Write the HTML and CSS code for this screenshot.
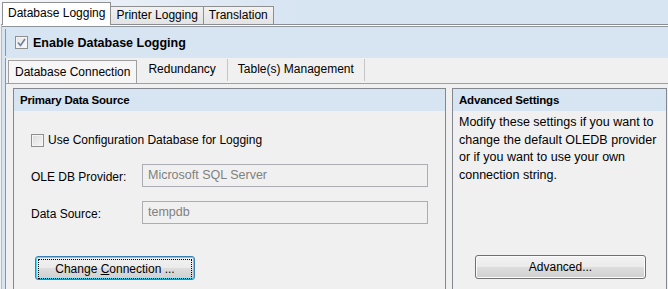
FILE: index.html
```html
<!DOCTYPE html>
<html>
<head>
<meta charset="utf-8">
<link rel="stylesheet" href="styles.css">
</head>
<body>
<div class="window">
  <div class="toptabs">
    <div class="ttab sel">Database Logging</div>
    <div class="ttab">Printer Logging</div>
    <div class="ttab">Translation</div>
  </div>
  <div class="page">
    <div class="enable">
      <span class="cb checked"><svg width="9" height="9" viewBox="0 0 9 9"><path d="M1 4.5 L3.5 7.5 L8 1" fill="none" stroke="#6d7f9c" stroke-width="1.6"/></svg></span>
      <span class="enable-label">Enable Database Logging</span>
    </div>
    <div class="inner">
      <div class="itabs">
        <div class="itab sel">Database Connection</div>
        <div class="itab">Redundancy</div>
        <div class="itab">Table(s) Management</div>
      </div>
      <div class="ipage">
        <section class="group primary">
          <div class="ghead">Primary Data Source</div>
          <div class="gbody">
            <div class="cfg"><span class="cb"></span><span>Use Configuration Database for Logging</span></div>
            <div class="field"><span class="flabel">OLE DB Provider:</span><div class="input">Microsoft SQL Server</div></div>
            <div class="field"><span class="flabel">Data Source:</span><div class="input">tempdb</div></div>
            <div class="btnrow"><button class="btn focus"><span class="focusring">Change <u>C</u>onnection ...</span></button></div>
          </div>
        </section>
        <section class="group adv">
          <div class="ghead">Advanced Settings</div>
          <div class="gbody advbody">
            <p class="desc">Modify these settings if you want to change the default OLEDB provider or if you want to use your own connection string.</p>
            <button class="btn advbtn">Advanced...</button>
          </div>
        </section>
      </div>
    </div>
  </div>
</div>
</body>
</html>
```
FILE: styles.css
```css
html, body {
  margin: 0;
  padding: 0;
  width: 668px;
  height: 289px;
  overflow: hidden;
  background: #f0f0f0;
  font-family: "Liberation Sans", Arial, sans-serif;
  font-size: 12px;
  color: #000;
}
.window {
  display: flex;
  flex-direction: column;
  height: 289px;
}
.toptabs {
  display: flex;
  align-items: flex-end;
  height: 24px;
  padding-left: 2px;
  background: linear-gradient(90deg, #f4f6f9 0, #d7e4f2 300px);
  position: relative;
  z-index: 2;
}
.ttab {
  height: 17px;
  line-height: 17px;
  padding: 0 5px;
  border: 1px solid #8e8f8f;
  border-bottom: none;
  border-left: none;
  background: linear-gradient(#f2f2f2, #e3e3e3);
  color: #000;
  box-sizing: content-box;
}
.ttab.sel {
  height: 22px;
  line-height: 21px;
  padding: 0 5px;
  border-left: 1px solid #8e8f8f;
  background: #fff;
  margin-bottom: -1px;
  font-size: 12px;
}
.page {
  flex: 1;
  margin-left: 1px;
  border-top: 1px solid #898c95;
  box-shadow: inset 0 1px 0 #ffffff, inset 0 2px 0 #8e949c;
  border-left: 1px solid #b8bcc2;
  background: #d7e4f2;
  padding: 2px 0 0 3px;
  display: flex;
  flex-direction: column;
}
.enable {
  display: flex;
  align-items: center;
  height: 27px;
  padding-left: 9px;
  margin-top: 2px;
  border-left: 1px solid #8e949c;
}
.enable-label {
  font-weight: bold;
  font-size: 12.5px;
  margin-left: 5px;
}
.cb {
  width: 11px;
  height: 11px;
  border: 1px solid #8e8f8f;
  background: linear-gradient(135deg, #dcdcdc, #f6f6f6);
  box-shadow: inset 0 0 0 1px #f4f4f4;
  display: inline-flex;
  align-items: center;
  justify-content: center;
  flex: none;
}
.cb.checked {
  background: linear-gradient(135deg, #e4e4e4, #fbfbfb);
}
.inner {
  flex: 1;
  display: flex;
  flex-direction: column;
  margin-top: 2px;
  border-left: 1px solid #8e949c;
}
.itabs {
  display: flex;
  height: 25px;
  background: #f0f0f0;
  padding-left: 2px;
  align-items: flex-end;
}
.itab {
  height: 22px;
  line-height: 21px;
  padding: 0 11px;
  border-right: 1px solid #c6c6c6;
  font-size: 12px;
  margin-bottom: 2px;
}
.itab:last-child { padding: 0 10px; }
.itab.sel {
  border: 1px solid #a0a0a0;
  border-bottom: none;
  background: #f6f6f6;
  padding: 0 6px;
  height: 22px;
  line-height: 22px;
  margin-bottom: 0;
}
.ipage {
  flex: 1;
  background: #f0f0f0;
  border-top: 1px solid #a0a0a0;
  display: grid;
  grid-template-columns: 433px 215px;
  column-gap: 6px;
  padding: 4px 0 0 7px;
  align-items: stretch;
}
.group {
  border: 1px solid #828790;
  border-bottom: none;
  background: #f0f0f0;
  display: flex;
  flex-direction: column;
}
.ghead {
  height: 22px;
  line-height: 22px;
  background: #d7e4f2;
  font-weight: bold;
  font-size: 11.5px;
  letter-spacing: -0.2px;
  padding-left: 6px;
}
.gbody {
  flex: 1;
  padding: 0 0 0 17px;
}
.cfg {
  display: flex;
  align-items: center;
  height: 14px;
  margin-top: 22px;
}
.cfg span:last-child { margin-left: 4px; font-size: 12px; }
.field {
  display: flex;
  align-items: center;
  margin-top: 17px;
}
.field + .field { margin-top: 14px; }
.flabel {
  width: 111px;
  font-size: 12px;
  padding-top: 2px;
}
.input {
  width: 279px;
  height: 21px;
  line-height: 21px;
  border: 1px solid #abadb3;
  background: #f0f0f0;
  color: #808080;
  padding-left: 5px;
  font-size: 12.5px;
}
.btnrow {
  margin-top: 32px;
  padding-left: 4px;
}
.btn {
  font-family: inherit;
  font-size: 12px;
  color: #000;
  border: 1px solid #707070;
  border-radius: 3px;
  background: linear-gradient(#f2f2f2 0%, #ebebeb 48%, #dddddd 52%, #cfcfcf 100%);
  box-shadow: inset 0 0 0 1px #fcfcfc;
  padding: 0;
  height: 24px;
}
.btn.focus {
  width: 160px;
  border-color: #3c7fb1;
  box-shadow: inset 0 0 0 1px #48d8f8;
  padding: 2px;
}
.focusring {
  display: block;
  height: 18px;
  line-height: 18px;
  border: 1px dotted #000;
}
.advbody {
  padding: 0 0 0 6px;
  display: flex;
  flex-direction: column;
}
.desc {
  margin: 3px 0 0 0;
  font-size: 12.5px;
  line-height: 17.5px;
  width: 200px;
}
.advbtn {
  width: 171px;
  margin-top: 71px;
  margin-left: 16px;
}
```
